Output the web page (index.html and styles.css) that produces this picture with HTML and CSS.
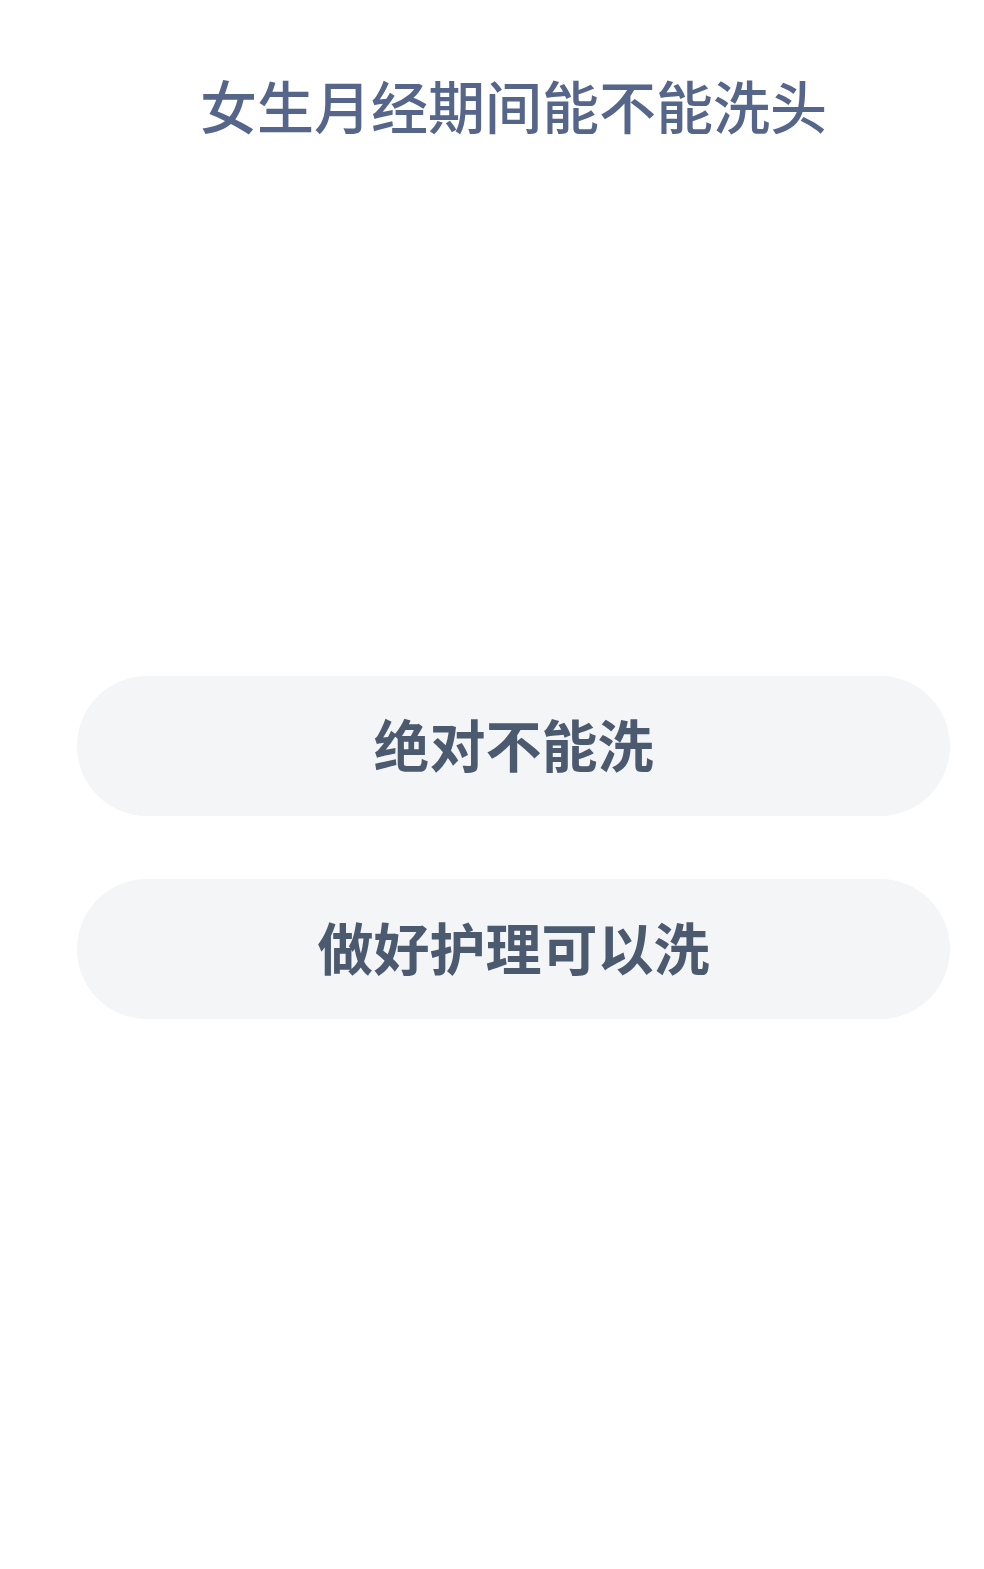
FILE: index.html
```html
<!DOCTYPE html>
<html lang="zh-CN">
<head>
    <meta charset="UTF-8">
    <meta name="viewport" content="width=device-width, initial-scale=1.0">
    <title>女生月经期间能不能洗头</title>
    <link rel="stylesheet" href="styles.css">
</head>
<body>
    <div class="quiz">
        <h1 class="question">女生月经期间能不能洗头</h1>
        <div class="options">
            <div class="option" onclick="pick(this)">绝对不能洗</div>
            <div class="option" onclick="pick(this)">做好护理可以洗</div>
        </div>
    </div>
    <script>
        function pick(el) {
            document.querySelectorAll('.option').forEach(function (o) {
                o.classList.remove('picked');
            });
            el.classList.add('picked');
        }
    </script>
</body>
</html>
```

FILE: styles.css
```css
body {
    margin: 0;
    background: #fff;
    font-family: "Noto Sans CJK SC", "Noto Sans", sans-serif;
}
.quiz {
    padding: 70px 34px 0 77px;
}
.question {
    margin: 0;
    font-size: 57px;
    line-height: 68px;
    font-weight: 500;
    color: #56658a;
    text-align: center;
}
.options {
    margin-top: 538px;
    display: flex;
    flex-direction: column;
    gap: 63px;
}
.option {
    height: 140px;
    box-sizing: border-box;
    padding-bottom: 8px;
    border-radius: 70px;
    background: #f4f5f7;
    color: #4b5a6e;
    font-size: 56px;
    font-weight: 700;
    display: flex;
    align-items: center;
    justify-content: center;
    cursor: pointer;
}
.option.picked {
    background: #e8ebf0;
}
```
